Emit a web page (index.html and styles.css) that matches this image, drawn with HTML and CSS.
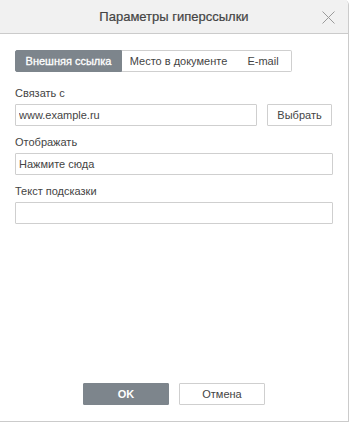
FILE: index.html
```html
<!DOCTYPE html>
<html lang="ru">
<head>
    <meta charset="UTF-8">
    <title>Параметры гиперссылки</title>
    <link rel="stylesheet" href="styles.css">
</head>
<body>
    <div class="dialog">
        <div class="header">
            <span class="title">Параметры гиперссылки</span>
            <span class="close">
                <svg width="13" height="13" viewBox="0 0 13 13"><path d="M0.5 0.5L12.5 12.5M12.5 0.5L0.5 12.5" stroke="#9a9a9a" stroke-width="1" fill="none"/></svg>
            </span>
        </div>
        <div class="body">
            <div class="tabs">
                <button class="tab tab-ext active">Внешняя ссылка</button>
                <button class="tab tab-doc">Место в документе</button>
                <button class="tab tab-mail">E-mail</button>
            </div>
            <label class="label">Связать с</label>
            <div class="row">
                <input class="input" type="text" value="www.example.ru">
                <button class="btn">Выбрать</button>
            </div>
            <label class="label">Отображать</label>
            <input class="input" type="text" value="Нажмите сюда">
            <label class="label">Текст подсказки</label>
            <input class="input" type="text" value="">
        </div>
        <div class="footer">
            <button class="btn primary">OK</button>
            <button class="btn">Отмена</button>
        </div>
    </div>
</body>
</html>
```

FILE: styles.css
```css
body {
    margin: 0;
    font-family: 'Liberation Sans', Arial, sans-serif;
    font-size: 11px;
    color: #444;
    background: #fff;
}

.dialog {
    box-sizing: border-box;
    width: 349px;
    height: 422px;
    border-right: 1px solid #cbcbcb;
    border-bottom: 1px solid #cbcbcb;
    border-top-right-radius: 5px;
    display: flex;
    flex-direction: column;
    overflow: hidden;
}

.header {
    height: 33px;
    flex-shrink: 0;
    background: #f1f1f1;
    border-bottom: 1px solid #cbcbcb;
    display: flex;
    align-items: center;
    justify-content: center;
    position: relative;
}

.title {
    font-size: 13px;
    color: #444;
    -webkit-text-stroke: 0.2px #444;
}

.close {
    position: absolute;
    right: 13px;
    top: 11px;
    line-height: 0;
}

.body {
    flex: 1;
    padding: 16px 15px 0 15px;
    display: flex;
    flex-direction: column;
}

.tabs {
    display: flex;
    align-self: flex-start;
    margin-bottom: 15px;
}

.tab {
    box-sizing: border-box;
    font-family: inherit;
    font-size: 11px;
    color: #444;
    background: #fff;
    border: 1px solid #cfcfcf;
    border-left: none;
    height: 22px;
    padding: 0;
    text-align: center;
}

.tab-ext {
    width: 107px;
}

.tab-doc {
    width: 113px;
    border-right: none;
}

.tab-mail {
    width: 57px;
    border-radius: 0 2px 2px 0;
}

.tab.active {
    background: #7d858c;
    border: 1px solid #7d858c;
    border-radius: 2px 0 0 2px;
    color: #fff;
    -webkit-text-stroke: 0.3px #fff;
}

.label {
    display: block;
    line-height: 13px;
    margin-bottom: 4px;
}

.row {
    display: flex;
    gap: 10px;
}

.input {
    box-sizing: border-box;
    height: 22px;
    width: 318px;
    border: 1px solid #cfcfcf;
    border-radius: 1px;
    padding: 0 3px;
    font-family: inherit;
    font-size: 11px;
    color: #444;
    margin: 0 0 10px 0;
}

.row .input {
    width: 242px;
}

.btn {
    box-sizing: border-box;
    height: 22px;
    width: 65px;
    border: 1px solid #cfcfcf;
    border-radius: 1px;
    background: #fff;
    font-family: inherit;
    font-size: 11px;
    color: #444;
    padding: 0;
}

.footer {
    display: flex;
    justify-content: center;
    gap: 10px;
    padding-bottom: 16px;
}

.footer .btn {
    width: 86px;
}

.btn.primary {
    background: #7d858c;
    border-color: #7d858c;
    color: #fff;
    font-weight: bold;
}
```
